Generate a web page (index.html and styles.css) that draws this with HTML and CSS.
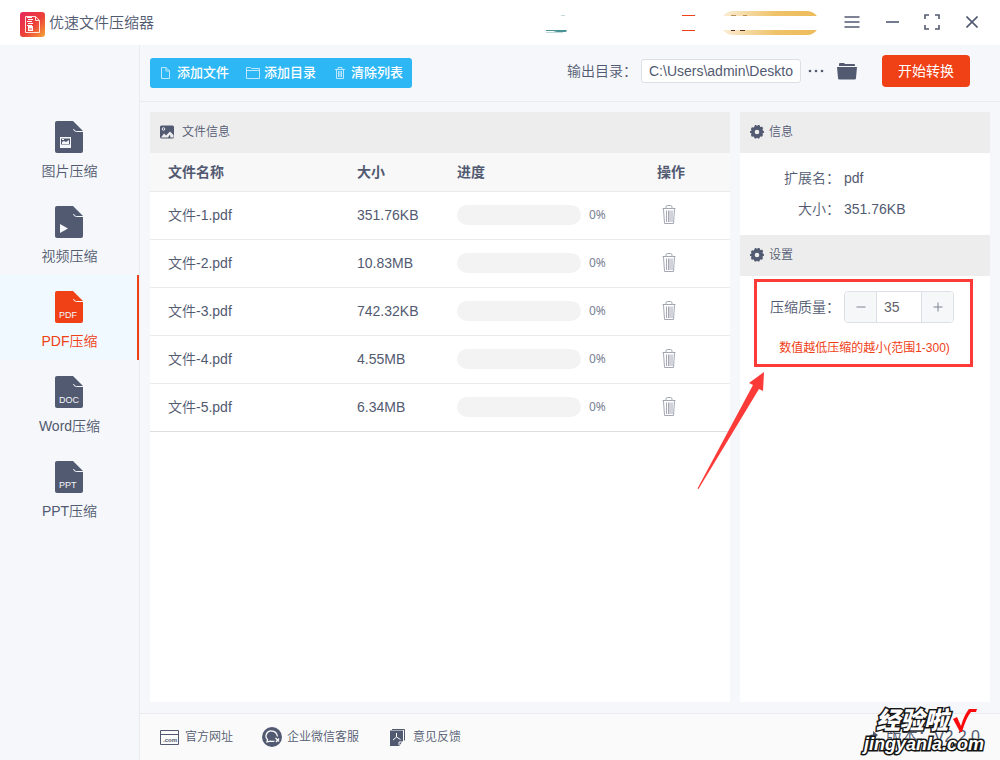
FILE: index.html
```html
<!DOCTYPE html>
<html lang="zh-CN">
<head>
<meta charset="utf-8">
<title>优速文件压缩器</title>
<link rel="stylesheet" href="styles.css">
</head>
<body>
<svg class="defs" aria-hidden="true">
  <defs>
    <symbol id="doc" viewBox="0 0 28 32">
      <path fill="currentColor" d="M2 0H18L28 10V30a2 2 0 0 1-2 2H2a2 2 0 0 1-2-2V2a2 2 0 0 1 2-2z"/>
      <path fill="none" stroke="#f5f7fa" stroke-width="1" d="M18.500 8q.5 2.500 3 2.500H28"/>
    </symbol>
    <symbol id="trash" viewBox="0 0 14 20">
      <path fill="none" stroke="currentColor" d="M.5 3.500h13M4 3.500V2q0-1.500 1.500-1.500h3Q10 .5 10 2v1.500M1.500 4l1 14.500h9l1-14.500M4.500 5.500v11.500M6.500 5.500v11.500M8 5.500v11.500M10 5.500v11.500"/>
    </symbol>
    <symbol id="gear" viewBox="0 0 14 14">
      <path fill="currentColor" fill-rule="evenodd" d="M5 0h1l1 1 1-1h1.500l.8 2 2-.2.9 1.500-.8 1.500L14 6.500v1.200l-1.600.8.6 1.500-1 1.700-1.900-.2L9.300 13.500H8L7 12.700l-1 .8H4.600l-.8-2-2 .2L.9 10l.7-1.500L0 7.700V6.300l1.600-.8L.9 4l1-1.700 2 .1zM7 4.700a2.300 2.300 0 1 0 0 4.600 2.300 2.300 0 0 0 0-4.600z"/>
    </symbol>
  </defs>
</svg>
<div class="app">
  <header class="titlebar">
    <svg class="logo" width="25" height="25" viewBox="0 0 25 25" aria-hidden="true">
      <defs><linearGradient id="lg" x1="0" y1="0" x2="1" y2="1"><stop offset="0" stop-color="#e8265c"/><stop offset=".55" stop-color="#ec4239"/><stop offset="1" stop-color="#f7a636"/></linearGradient></defs>
      <rect width="25" height="25" rx="3" fill="url(#lg)"/>
      <path fill="none" stroke="#ffe4e0" d="M5.500 4.500h10l4 4v12h-14zM15.500 4.500v4h4"/>
      <path fill="none" stroke="#fff" d="M7 5.500h5M8 7.500h5M7 9.500h5M8 11.500h5M7 13.500h5"/>
      <path fill="#fff" fill-rule="evenodd" d="M8 14h5v5H8zM9 16.500h3v1H9z"/>
    </svg>
    <h1 class="title">优速文件压缩器</h1>
    <svg class="account" width="278" height="24" viewBox="0 0 278 24" aria-hidden="true">
      <defs><linearGradient id="gold"><stop offset="0" stop-color="#fbeed8"/><stop offset=".55" stop-color="#efc36a"/><stop offset="1" stop-color="#edbb59"/></linearGradient></defs>
      <rect x="176" width="98" height="24" rx="12" fill="url(#gold)"/>
      <path fill="#b98f55" d="M186 4h5v1h-5zM198 4h4v1h-4z"/>
      <path fill="#5b3021" d="M186 19h4v1h-4zM195 19h5v1h-5z"/>
      <rect y="5" width="278" height="14" fill="#fff"/>
      <path fill="#ef4016" d="M137 4h13v1h-13zM137 19h13v1h-13z"/>
      <path fill="#4b9296" d="M1 19h21l-1 2h-9l-4-1H1z"/>
      <path fill="#c3dadd" d="M1 21h17v1H1zM16 4h4v1h-4z"/>
    </svg>
    <div class="window-controls">
      <button type="button" aria-label="菜单"><svg width="16" height="14" viewBox="0 0 16 14"><path d="M.5 2h15M.5 7h15M.5 12h15"/></svg></button>
      <button type="button" aria-label="最小化"><svg width="14" height="14" viewBox="0 0 14 14"><path d="M1 7h13"/></svg></button>
      <button type="button" aria-label="最大化"><svg width="16" height="16" viewBox="0 0 16 16"><path stroke-width="2" d="M1 5V1h4M11 1h4v4M15 11v4h-4M5 15H1v-4"/></svg></button>
      <button type="button" aria-label="关闭"><svg width="12" height="12" viewBox="0 0 12 12"><path d="M.5.5l11 11M11.500.5l-11 11"/></svg></button>
    </div>
  </header>

  <nav class="sidebar">
    <a class="nav-item" href="#image"><svg class="nav-icon" viewBox="0 0 28 32"><use href="#doc"/><path fill="#f5f7fa" fill-rule="evenodd" d="M5 16h11v11H5zM6 17.500v6h9v-6z"/><path fill="#f5f7fa" d="M7 23v-2l2-1 2 1 3-2v4zM7 18h2v1H7z"/></svg>图片压缩</a>
    <a class="nav-item" href="#video"><svg class="nav-icon" viewBox="0 0 28 32"><use href="#doc"/><path fill="#f5f7fa" d="M5 18l8 4.500L5 27z"/></svg>视频压缩</a>
    <a class="nav-item active" href="#pdf" aria-current="page"><svg class="nav-icon" viewBox="0 0 28 32"><use href="#doc"/><text x="4" y="27">PDF</text></svg>PDF压缩</a>
    <a class="nav-item" href="#word"><svg class="nav-icon" viewBox="0 0 28 32"><use href="#doc"/><text x="4" y="27">DOC</text></svg>Word压缩</a>
    <a class="nav-item" href="#ppt"><svg class="nav-icon" viewBox="0 0 28 32"><use href="#doc"/><text x="4" y="27">PPT</text></svg>PPT压缩</a>
  </nav>

  <div class="toolbar">
    <div class="actions">
      <button type="button" class="add-file"><svg width="9" height="12" viewBox="0 0 9 12"><path d="M.5.5H5L8.500 4v7.500h-8zM5 .5V4h3.500"/></svg>添加文件</button>
      <button type="button" class="add-dir"><svg width="14" height="12" viewBox="0 0 14 12"><path d="M.5 11.500V.5h4l1 1h8v10zM.5 3.500h13"/></svg>添加目录</button>
      <button type="button" class="clear"><svg width="10" height="12" viewBox="0 0 10 12"><path d="M0 2.500h10M3 2V.5h4V2M1.500 3v8.500h7V3M3.500 4v6M5 4v6M6.500 4v6"/></svg>清除列表</button>
    </div>
    <div class="output">
      <label for="out">输出目录：</label>
      <input id="out" type="text" value="C:\Users\admin\Deskto">
      <button type="button" class="more" aria-label="更多"><svg width="16" height="4" viewBox="0 0 16 4"><circle cx="2" cy="2" r="1.300"/><circle cx="8" cy="2" r="1.300"/><circle cx="14" cy="2" r="1.300"/></svg></button>
      <button type="button" class="folder" aria-label="打开目录"><svg width="20" height="18" viewBox="0 0 20 18"><path d="M2 3V2q0-1 1-1h4l1 1h9q1 0 1 1v1H2z"/><path d="M0 5h20l-1 11q0 1.500-1.500 1.500h-15Q1 17.500 1 16z"/></svg></button>
      <button type="button" class="start">开始转换</button>
    </div>
  </div>

  <main class="content">
    <section class="panel">
      <h2 class="band files"><svg width="14" height="14" viewBox="0 0 14 14"><rect width="14" height="13" y=".5" rx="1.500" fill="currentColor"/><circle cx="3.500" cy="4" r="1.300" fill="none" stroke="#eee"/><path fill="#eee" d="M1 12.500l3-4 2 2 4-4 3.500 3.500v2.500h-3L10 9.500l-2 3z"/></svg>文件信息</h2>
      <table class="files-table">
        <colgroup><col class="c-name"><col class="c-size"><col class="c-progress"><col></colgroup>
        <thead><tr><th>文件名称</th><th>大小</th><th>进度</th><th>操作</th></tr></thead>
        <tbody>
          <tr><td>文件-1.pdf</td><td>351.76KB</td><td><div class="progress"><span class="bar"></span>0%</div></td><td><button type="button" class="del" aria-label="删除"><svg><use href="#trash"/></svg></button></td></tr>
          <tr><td>文件-2.pdf</td><td>10.83MB</td><td><div class="progress"><span class="bar"></span>0%</div></td><td><button type="button" class="del" aria-label="删除"><svg><use href="#trash"/></svg></button></td></tr>
          <tr><td>文件-3.pdf</td><td>742.32KB</td><td><div class="progress"><span class="bar"></span>0%</div></td><td><button type="button" class="del" aria-label="删除"><svg><use href="#trash"/></svg></button></td></tr>
          <tr><td>文件-4.pdf</td><td>4.55MB</td><td><div class="progress"><span class="bar"></span>0%</div></td><td><button type="button" class="del" aria-label="删除"><svg><use href="#trash"/></svg></button></td></tr>
          <tr><td>文件-5.pdf</td><td>6.34MB</td><td><div class="progress"><span class="bar"></span>0%</div></td><td><button type="button" class="del" aria-label="删除"><svg><use href="#trash"/></svg></button></td></tr>
        </tbody>
      </table>
    </section>
    <aside class="panel">
      <h2 class="band"><svg width="14" height="14"><use href="#gear"/></svg>信息</h2>
      <dl class="info">
        <dt>扩展名：</dt><dd>pdf</dd>
        <dt>大小：</dt><dd>351.76KB</dd>
      </dl>
      <h2 class="band"><svg width="14" height="14"><use href="#gear"/></svg>设置</h2>
      <div class="highlight">
        <div class="quality">
          <label for="q">压缩质量：</label>
          <div class="stepper">
            <button type="button" aria-label="减少"><svg width="10" height="10" viewBox="0 0 10 10"><path d="M.5 5h9"/></svg></button>
            <input id="q" type="text" inputmode="numeric" value="35">
            <button type="button" aria-label="增加"><svg width="10" height="10" viewBox="0 0 10 10"><path d="M.5 5h9M5 .5v9"/></svg></button>
          </div>
        </div>
        <p class="hint">数值越低压缩的越小(范围1-300)</p>
        <svg class="arrow" width="70" height="120" viewBox="0 0 70 120" aria-hidden="true"><path fill="#fc3a38" d="M67 2l-1 19-4-2L1.500 119l-1-.5L56 15l-4-2z"/></svg>
      </div>
    </aside>
  </main>

  <footer class="footer">
    <a href="#site"><svg width="19" height="16" viewBox="0 0 19 16"><path fill="none" stroke="currentColor" d="M.5 1.500h18v14H.5zM.5 5.500h18"/><text class="com" x="3" y="13">.com</text></svg>官方网址</a>
    <a class="wechat" href="#service"><svg width="20" height="20" viewBox="0 0 20 20"><circle cx="10" cy="10" r="10" fill="currentColor"/><path fill="none" stroke="#fafafa" stroke-width="1.300" d="M12.500 14q-2 .8-4 .2L5 15l.5-2.500A5 5 0 0 1 9.500 4q5 0 6 5.500"/><path fill="none" stroke="#fafafa" stroke-width="1.300" d="M13.500 11l3.500 3.500M17 11.500l-3 3.500"/></svg>企业微信客服</a>
    <a class="feedback" href="#feedback"><svg width="15" height="17" viewBox="0 0 15 17"><path fill="none" stroke="currentColor" d="M2 .5h12.500v11"/><path fill="currentColor" d="M0 1.500h13V12l-4 5H0z"/><path fill="none" stroke="#fafafa" d="M6.500 4v4L3 11M6.500 8l4 2.500M9 16v-3h4"/></svg>意见反馈</a>
    <span class="version"><svg width="12" height="12" viewBox="0 0 12 12"><path fill="none" stroke="currentColor" stroke-width="1.500" d="M1 11q1-7 7-7"/><path fill="currentColor" d="M7 0l5 4-5 4z"/></svg>版本：V2.2.0</span>
    <div class="watermark">
      <div class="mark-top">经验啦<svg width="24" height="24" viewBox="0 0 24 24" aria-hidden="true"><path fill="#fa0a0a" d="M0 10l4-2 4 9Q11 6 16 0h8l-1 3h-5Q13 9 9 23H7z"/></svg></div>
      <div class="mark-url">jingyanla.com</div>
    </div>
  </footer>
</div>
</body>
</html>
```
FILE: styles.css
```css
* { box-sizing: border-box; }
body {
  margin: 0;
  background: #f5f7fa;
  color: #525a71;
  font: 14px/20px "Liberation Sans", "Noto Sans CJK SC", sans-serif;
}
.defs { position: absolute; width: 0; height: 0; }
button, input { font: inherit; color: inherit; }
button { border: 0; padding: 0; background: none; cursor: pointer; }
a { color: inherit; text-decoration: none; }
svg { flex: none; }

.app {
  display: grid;
  grid-template: 45px 57px 1fr 47px / 140px 1fr;
  min-height: 100vh;
}

/* title bar */
.titlebar {
  grid-column: 1 / -1;
  display: flex;
  align-items: center;
  background: #fff;
  padding: 0 8px 0 20px;
}
.logo { margin-top: 3px; }
.title { margin: 0 auto 0 4px; font-size: 15px; font-weight: 350; }
.account { margin-right: 9px; }
.window-controls { display: flex; padding-bottom: 2px; }
.window-controls button {
  width: 40px;
  height: 41px;
  display: grid;
  place-items: center;
}
.window-controls path { fill: none; stroke: #525a71; stroke-width: 1.6; }

/* sidebar */
.sidebar {
  grid-row: 2 / -1;
  border-right: 1px solid #e9ebee;
  padding-top: 60px;
  font-weight: 350;
}
.nav-item {
  display: flex;
  flex-direction: column;
  align-items: center;
  gap: 8px;
  height: 85px;
  padding-top: 16px;
}
.nav-item.active {
  padding-left: 2px;
  background: #f0f9ff;
  border-right: 2px solid #ef4016;
  color: #ef4016;
}
.nav-icon { width: 28px; height: 32px; margin-right: 1px; }
.nav-icon text { font: 9px "Liberation Sans", sans-serif; fill: #f5f7fa; }

/* toolbar */
.toolbar {
  display: flex;
  align-items: center;
  justify-content: space-between;
  padding: 0 30px 4px 10px;
  border-bottom: 1px solid #e9ebee;
}
.actions {
  display: flex;
  margin-top: 3px;
  height: 30px;
  padding: 0 9px 0 11px;
  gap: 17px;
  border-radius: 3px;
  background: #2db7f5;
}
.actions button {
  display: flex;
  align-items: center;
  gap: 4px;
  color: #fff;
  font-size: 13px;
  font-weight: 500;
}
.actions .add-file { gap: 7px; }
.actions .clear { gap: 6px; margin-left: 2px; }
.actions path { fill: none; stroke: #bfe8fd; }
.output { display: flex; align-items: center; }
.output label { width: 74px; font-weight: 350; }
.output input {
  width: 160px;
  height: 24px;
  padding: 0 7px;
  border: 1px solid #dcdfe6;
  border-radius: 3px;
  background: #fff;
}
.output svg { display: block; fill: #525a71; }
.more { margin: 0 13px 0 7px; }
.folder { margin-right: 25px; }
.start {
  width: 88px;
  height: 32px;
  border-radius: 4px;
  background: #ef4016;
  color: #fff;
}

/* content */
.content {
  display: grid;
  grid-template-columns: 1fr 250px;
  gap: 10px;
  padding: 10px 10px 11px;
}
.panel { background: #fff; min-width: 0; }
.band {
  display: flex;
  align-items: center;
  gap: 5px;
  height: 41px;
  margin: 0;
  padding: 0 10px 2px;
  background: #ededed;
  font-size: 12px;
  font-weight: 350;
}
.band.files { gap: 8px; }
.files-table {
  width: 100%;
  border-collapse: collapse;
  table-layout: fixed;
}
.c-name { width: 189px; }
.c-size { width: 100px; }
.c-progress { width: 200px; }
th, td {
  padding: 0 0 0 18px;
  text-align: left;
  border-bottom: 1px solid #e8eaec;
}
th { height: 38px; background: #f8f8f9; font-weight: 700; }
td { height: 48px; font-weight: 350; }
tbody tr:last-child td { border-bottom-color: #dcdee2; }
.progress {
  display: flex;
  align-items: center;
  gap: 8px;
  color: #7b8192;
  font: 12px/20px "Noto Sans", sans-serif;
}
.bar { width: 124px; height: 20px; border-radius: 10px; background: #f3f3f3; }
.del { display: block; margin-left: 5px; color: #a4a8b5; }
.del svg { display: block; width: 14px; height: 20px; }

.info {
  display: grid;
  grid-template-columns: 90px 1fr;
  grid-auto-rows: 31px;
  column-gap: 4px;
  align-items: center;
  margin: 0;
  padding: 9px 10px 11px;
  font-weight: 350;
}
.info dt { text-align: right; }
.info dd { margin: 0; }
.highlight {
  position: relative;
  margin: 3px 17px 0 14px;
  padding: 9px 13px 6px;
  border: 3px solid #fc3a38;
}
.quality { display: flex; align-items: center; font-weight: 350; }
.quality label { width: 74px; }
.stepper {
  display: flex;
  height: 32px;
  border: 1px solid #dcdfe6;
  border-radius: 4px;
  overflow: hidden;
}
.stepper button {
  width: 31px;
  background: #f6f7f8;
  display: grid;
  place-items: center;
}
.stepper path { stroke: #7d8394; }
.stepper input {
  width: 46px;
  padding: 0 7px;
  border: solid #dcdfe6;
  border-width: 0 1px;
  background: #fff;
  color: #606266;
}
.hint {
  margin: 15px 0 0;
  padding-left: 2px;
  color: #ef4016;
  font-size: 12px;
  text-align: center;
  white-space: nowrap;
}
.arrow { position: absolute; top: 88px; left: -60px; }

/* footer */
.footer {
  position: relative;
  display: flex;
  align-items: center;
  padding: 0 20px;
  border-top: 1px solid #e9ebee;
  background: #fafafa;
  font-size: 12px;
  font-weight: 350;
}
.footer a { display: flex; align-items: center; gap: 6px; margin-right: 29px; }
.footer .wechat { gap: 5px; margin-right: 31px; }
.footer .feedback { gap: 8px; }
.com { font: bold 6px "Liberation Sans", sans-serif; fill: #525a71; }
.version {
  display: flex;
  align-items: center;
  gap: 8px;
  margin-left: auto;
  font-size: 16px;
}
.watermark {
  position: absolute;
  right: 16px;
  bottom: 6px;
  color: #fff;
  font-weight: 900;
  -webkit-text-stroke: 3px #151515;
  paint-order: stroke fill;
  white-space: nowrap;
}
.mark-top {
  display: flex;
  align-items: center;
  gap: 5px;
  margin-left: 12px;
  font-size: 24px;
  line-height: 26px;
  font-style: italic;
}
.mark-url { font-size: 18px; line-height: 20px; font-style: italic; }
```
